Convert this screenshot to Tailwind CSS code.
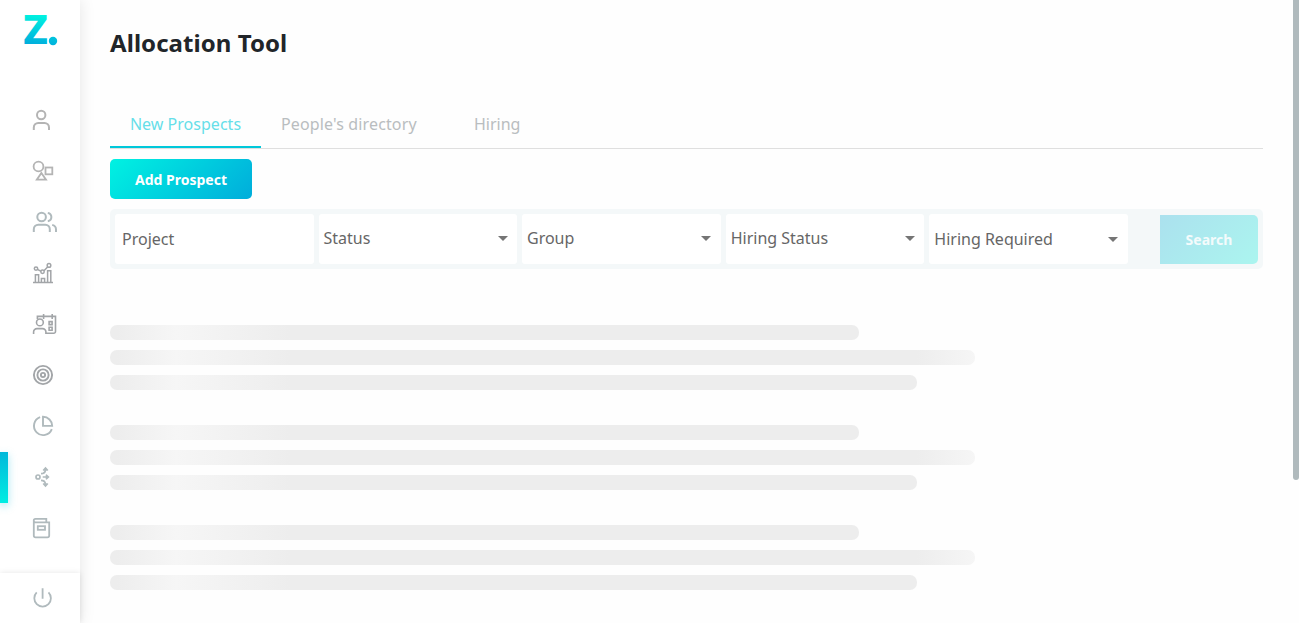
<!DOCTYPE html>
<html lang="en">
<head>
<meta charset="utf-8">
<title>Allocation Tool</title>
<script src="https://cdn.jsdelivr.net/npm/@tailwindcss/browser@4"></script>
</head>
<body class="relative flex h-[623px] overflow-hidden bg-[#fefefe] font-['Noto_Sans',sans-serif] text-base">

<aside class="relative flex w-20 shrink-0 flex-col bg-white shadow-[0_0_15px_rgba(0,0,0,0.1)]">
  <svg class="h-[94px] w-20 shrink-0" viewBox="0 0 80 94">
    <defs><linearGradient id="logo" gradientUnits="userSpaceOnUse" x1="38" y1="15" x2="34" y2="47"><stop stop-color="#00f2e0"/><stop offset="1" stop-color="#00a8dc"/></linearGradient></defs>
    <text x="23.2" y="44" font-family="Noto Sans" font-weight="800" font-size="40.6" textLength="24.6" lengthAdjust="spacingAndGlyphs" fill="url(#logo)">Z</text>
    <circle cx="53" cy="41" r="4.2" fill="url(#logo)"/>
  </svg>
  <nav class="flex flex-1 flex-col text-[#b0babd]">
    <a class="flex h-[51px] items-center pl-[29px]"><svg class="size-7" viewBox="29 106 28 28" fill="none" stroke="#b4b4b4" stroke-width="2"><circle cx="41.2" cy="115" r="4.2"/><path d="M33.8 130v-2.6a4.5 4.5 0 0 1 4.5-4.5h6.2a4.5 4.5 0 0 1 4.5 4.5v2.6"/></svg></a>
    <a class="flex h-[51px] items-center pl-[29px]"><svg class="size-7" viewBox="29 157 28 28" fill="none" stroke="#b4b4b4" stroke-width="1.8"><circle cx="38.5" cy="166.5" r="4.9"/><rect x="45.5" y="167.5" width="6.8" height="6.8"/><path d="M41.4 172.9 46 179.7H36.8Z"/></svg></a>
    <a class="flex h-[51px] items-center pl-[29px]"><svg class="size-7" viewBox="29 208 28 28" fill="none" stroke="currentColor" stroke-width="2"><circle cx="41.6" cy="217" r="4.3"/><path d="M33.8 232v-2.8a4.5 4.5 0 0 1 4.5-4.5h7a4.5 4.5 0 0 1 4.5 4.5v2.8M47.8 212.9a4.2 4.2 0 0 1 0 8.3M52.2 224.9c2.6.7 3.8 2.3 3.8 4.6v2.5"/></svg></a>
    <a class="flex h-[51px] items-center pl-[29px]"><svg class="size-7" viewBox="29 259 28 28" fill="none" stroke="#a2a5a8" stroke-width="1.5"><path d="M33 282.4h20M35.4 282v-7.3h3.2v7.3M41.4 282v-3.6h3.2v3.6M47.6 282v-11.3h3.2V282M37.4 269.4l3.8 2M44 270.7l3.8-4"/><circle cx="36" cy="268.6" r="1.7"/><circle cx="42.5" cy="271.8" r="1.7"/><circle cx="49" cy="265.4" r="1.8"/></svg></a>
    <a class="flex h-[51px] items-center pl-[29px]"><svg class="size-7" viewBox="29 310 28 28" fill="none" stroke="#a2a5a8" stroke-width="1.6"><circle cx="39.9" cy="322.4" r="3.4"/><path d="M33.6 334v-2a3.4 3.4 0 0 1 3.4-3.4h5.5a3.4 3.4 0 0 1 3.4 3.4v1.3h7.8a1.8 1.8 0 0 0 1.8-1.8V316.4H37.4v2.5M43.6 314v5M52.2 314v5"/><path d="M49.1 321.6h3v3h-3zM49.1 327.2h3v3h-3z"/></svg></a>
    <a class="flex h-[51px] items-center pl-[29px]"><svg class="size-7" viewBox="29 361 28 28" fill="none" stroke="#a2a5a8" stroke-width="1.9"><circle cx="43" cy="375" r="9.1"/><circle cx="43" cy="375" r="5.6"/><circle cx="43" cy="375" r="2.1"/></svg></a>
    <a class="flex h-[51px] items-center pl-[29px]"><svg class="size-7" viewBox="29 412 28 28" fill="none" stroke="currentColor" stroke-width="1.9"><path d="M40.1 417.2a9.2 9.2 0 1 0 11.7 11.9M43 416.8v9.1h9.2a9.2 9.2 0 0 0-9.2-9.1Z"/></svg></a>
    <a class="flex h-[51px] items-center"><span class="mt-0.5 h-[51px] w-2 shrink-0 bg-linear-to-t from-[#00ede2] to-[#00b8da] shadow-[0_3px_8px_rgba(0,184,218,0.35)]"></span>
      <svg class="ml-[21px] size-7" viewBox="29 463 28 28" fill="none" stroke="currentColor" stroke-width="1.7"><circle cx="38" cy="477" r="2"/><path d="M42.7 477h4.6M41 473.7c2.7 0 4.2-1.2 4.4-3.6M41 480.3c2.7 0 4.2 1.2 4.4 3.6"/><path fill="currentColor" stroke="none" d="m45.5 466.7 2.9 3.2-.7.9h-4.4l-.7-.9zM49.6 477l-3 2.8-.9-.6v-4.4l.9-.6zM45.5 487.3l2.9-3.2-.7-.9h-4.4l-.7.9z"/></svg></a>
    <a class="flex h-[51px] items-center pl-[29px]"><svg class="size-7" viewBox="29 514 28 28" fill="none" stroke="currentColor" stroke-width="1.8"><path d="M33.8 520.8v14.7a1.8 1.8 0 0 0 1.8 1.8h11.8a1.8 1.8 0 0 0 1.8-1.8v-13.2H35.5a1.7 1.7 0 0 1 0-3.5h10.8v3.3"/><rect x="37.8" y="526.2" width="7.2" height="3.6"/></svg></a>
  </nav>
  <div class="flex h-[50px] shrink-0 items-center bg-white pl-[29px] text-[#b0babd] shadow-[0_0_6px_rgba(0,0,0,0.1)]"><svg class="size-7" viewBox="29 584 28 28" fill="none" stroke="currentColor" stroke-width="1.8"><path d="M42.6 588.2v10.5M36.7 592.4a8.3 8.3 0 1 0 11.8 0"/></svg></div>
</aside>

<main class="ml-[30px] flex w-[1153px] flex-col">
  <h1 class="mt-[25px] text-2xl leading-9 font-bold tracking-[0.06px] text-[#212529]">Allocation Tool</h1>
  <div class="mt-[39px] flex h-[49px] border-b border-[#dfdfdf] text-[#b9bdc0]">
    <div class="flex h-12 w-[151px] justify-center border-b-2 border-[#00c8da] pt-3 tracking-[0.02px] text-[#66dfe9]">New Prospects</div>
    <div class="w-[176px] pt-3 pl-5 tracking-[0.13px]">People's directory</div>
    <div class="pt-3 pl-[37px]">Hiring</div>
  </div>
  <button class="mt-2.5 h-10 w-[142px] rounded-[5px] bg-linear-[135deg,#00f2e2,#00addb] pt-0.5 text-sm font-bold text-white">Add Prospect</button>

  <div class="mt-2.5 flex h-[60px] items-center gap-[5px] rounded-[5px] bg-[#f4f8f9] p-[5px] text-[#666]">
    <div class="flex h-[50px] w-[199px] items-center rounded-[3px] bg-white pl-[7px]">Project</div>
    <div class="flex h-[50px] w-[198px] items-center justify-between rounded-[3px] bg-white pr-[9px] pb-0.5 pl-[4.5px]">Status<svg class="h-[5px] w-2.5" viewBox="0 0 10 5"><path fill="#757575" d="M0 0h10L5 5z"/></svg></div>
    <div class="flex h-[50px] w-[199px] items-center justify-between rounded-[3px] bg-white pr-[10px] pb-0.5 pl-[5px]">Group<svg class="h-[5px] w-2.5" viewBox="0 0 10 5"><path fill="#757575" d="M0 0h10L5 5z"/></svg></div>
    <div class="flex h-[50px] w-[198px] items-center justify-between rounded-[3px] bg-white pr-[9px] pb-0.5 pl-[4.7px]">Hiring Status<svg class="h-[5px] w-2.5" viewBox="0 0 10 5"><path fill="#757575" d="M0 0h10L5 5z"/></svg></div>
    <div class="flex h-[50px] w-[199px] items-center justify-between rounded-[3px] bg-white pr-[10px] pl-[5.3px]">Hiring Required<svg class="h-[5px] w-2.5" viewBox="0 0 10 5"><path fill="#757575" d="M0 0h10L5 5z"/></svg></div>
    <button class="mt-px ml-auto h-[49px] w-[98px] rounded-r-[5px] bg-linear-[135deg,#abe1ee,#abf5ef] text-sm font-bold text-[#f4fbfc]">Search</button>
  </div>

  <div class="mt-14 flex flex-col gap-[35px]">
    <div class="flex flex-col gap-2.5 *:h-[15px] *:rounded-[7px] *:bg-[linear-gradient(to_right,#ededed_7px,#f6f6f6_66px,#ededed_180px)] *:bg-size-[800px_104px]">
      <div class="w-[749px]"></div><div class="w-[865px]"></div><div class="w-[807px]"></div>
    </div>
    <div class="flex flex-col gap-2.5 *:h-[15px] *:rounded-[7px] *:bg-[linear-gradient(to_right,#ededed_7px,#f6f6f6_66px,#ededed_180px)] *:bg-size-[800px_104px]">
      <div class="w-[749px]"></div><div class="w-[865px]"></div><div class="w-[807px]"></div>
    </div>
    <div class="flex flex-col gap-2.5 *:h-[15px] *:rounded-[7px] *:bg-[linear-gradient(to_right,#ededed_7px,#f6f6f6_66px,#ededed_180px)] *:bg-size-[800px_104px]">
      <div class="w-[749px]"></div><div class="w-[865px]"></div><div class="w-[807px]"></div>
    </div>
  </div>
</main>
<div class="ml-auto h-[480px] w-1.5 rounded-b-[3px] bg-[#b0babd]"></div>
</body>
</html>
